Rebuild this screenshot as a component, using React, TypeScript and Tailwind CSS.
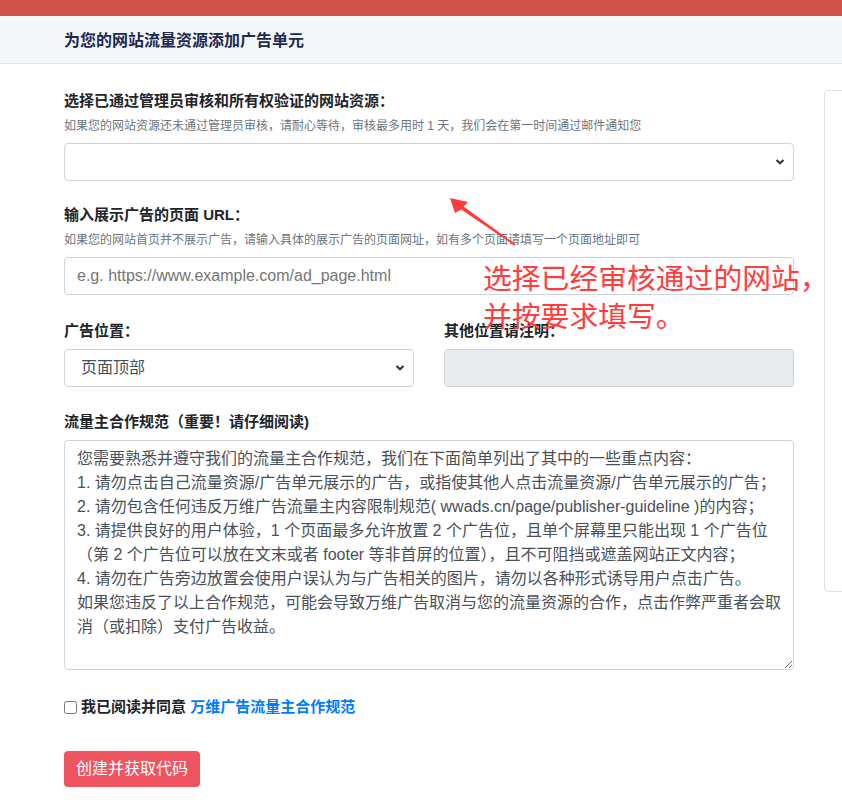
import React from 'react'

const rules = `您需要熟悉并遵守我们的流量主合作规范，我们在下面简单列出了其中的一些重点内容：
1. 请勿点击自己流量资源/广告单元展示的广告，或指使其他人点击流量资源/广告单元展示的广告；
2. 请勿包含任何违反万维广告流量主内容限制规范( wwads.cn/page/publisher-guideline )的内容；
3. 请提供良好的用户体验，1 个页面最多允许放置 2 个广告位，且单个屏幕里只能出现 1 个广告位
（第 2 个广告位可以放在文末或者 footer 等非首屏的位置），且不可阻挡或遮盖网站正文内容；
4. 请勿在广告旁边放置会使用户误认为与广告相关的图片，请勿以各种形式诱导用户点击广告。
如果您违反了以上合作规范，可能会导致万维广告取消与您的流量资源的合作，点击作弊严重者会取
消（或扣除）支付广告收益。`

function Chevron() {
  return (
    <svg width="10" height="7" viewBox="0 0 10 7" className="pointer-events-none absolute right-[9px] top-1/2 -translate-y-1/2">
      <path d="M1.5 1.5 L5 4.8 L8.5 1.5" fill="none" stroke="#343a40" strokeWidth="2.2" />
    </svg>
  )
}

function Label({ children }: { children: React.ReactNode }) {
  return <label className="block text-[15px] leading-[21px] font-bold text-[#212529]">{children}</label>
}

function Help({ children }: { children: React.ReactNode }) {
  return <p className="mt-[6px] text-[12px] leading-[18px] text-[#6c757d]">{children}</p>
}

export default function App() {
  return (
    <div
      className="relative min-h-[802px] w-full overflow-hidden bg-white"
      style={{ fontFamily: '"Liberation Sans", "Noto Sans CJK SC", sans-serif' }}
    >
      {/* top bar */}
      <div className="h-4 bg-[#d0514a]" />

      {/* header */}
      <div className="flex h-[48px] items-center border-b border-[#e3e6ea] bg-[#f4f7fa] pl-16 pt-[3px]">
        <h1 className="text-[16px] font-bold text-[#1c2a52]">为您的网站流量资源添加广告单元</h1>
      </div>

      <div className="flex gap-[30px] pl-16 pt-[26px]">
        {/* form */}
        <div className="w-[730px] shrink-0">
          <div>
            <Label>选择已通过管理员审核和所有权验证的网站资源：</Label>
            <Help>如果您的网站资源还未通过管理员审核，请耐心等待，审核最多用时 1 天，我们会在第一时间通过邮件通知您</Help>
            <div className="relative mt-2">
              <select className="h-[38px] w-full appearance-none rounded border border-[#ced4da] bg-white pl-4 text-[16px] text-[#495057]">
                <option></option>
              </select>
              <Chevron />
            </div>
          </div>

          <div className="mt-[23px]">
            <Label>输入展示广告的页面 URL：</Label>
            <Help>如果您的网站首页并不展示广告，请输入具体的展示广告的页面网址，如有多个页面请填写一个页面地址即可</Help>
            <input
              className="mt-2 h-[38px] w-full rounded border border-[#ced4da] px-3 text-[16px] text-[#495057] placeholder:text-[#757575]"
              placeholder="e.g. https://www.example.com/ad_page.html"
            />
          </div>

          <div className="mt-[25px] grid grid-cols-2 gap-[30px]">
            <div>
              <Label>广告位置：</Label>
              <div className="relative mt-[8px]">
                <select className="h-[38px] w-full appearance-none rounded border border-[#ced4da] bg-white pl-4 text-[16px] text-[#495057]">
                  <option>页面顶部</option>
                  <option>页面底部</option>
                  <option>其他位置</option>
                </select>
                <Chevron />
              </div>
            </div>
            <div>
              <Label>其他位置请注明：</Label>
              <input disabled className="mt-[8px] h-[38px] w-full rounded border border-[#ced4da] bg-[#e9ecef] px-3" />
            </div>
          </div>

          <div className="mt-[24px]">
            <Label>流量主合作规范（重要！请仔细阅读)</Label>
            <textarea
              className="mt-[8px] block h-[230px] w-full rounded border border-[#ced4da] px-3 py-[6px] text-[16px] leading-[24px] text-[#495057]"
              defaultValue={rules}
            />
          </div>

          <div className="mt-[26px] flex items-center gap-1">
            <input type="checkbox" className="m-0 h-[13px] w-[13px]" />
            <span className="text-[15px] font-bold text-[#212529]">
              我已阅读并同意 <a className="text-[#007bff]">万维广告流量主合作规范</a>
            </span>
          </div>

          <button className="mt-[32px] h-[36px] rounded bg-[#ef5461] px-3 text-[16px] text-white">
            创建并获取代码
          </button>
        </div>

        {/* side card */}
        <div className="h-[502px] w-[300px] shrink-0 rounded border border-[#dee2e6]" />
      </div>

      {/* annotation */}
      <svg width="90" height="65" viewBox="0 0 90 65" className="absolute left-[440px] top-[190px]">
        <polygon
          points="10,8 28,12 23.6,16.4 75.6,54.3 74.6,55.7 21.2,19.6 15,23"
          fill="#ff3b3b"
        />
      </svg>
      <div
        className="absolute left-[483px] top-[258px] text-[28.8px] leading-[38px] text-[#ff3d3d]"
        style={{ fontFamily: '"Noto Sans CJK SC", sans-serif' }}
      >
        选择已经审核通过的网站，
        <br />
        并按要求填写。
      </div>
    </div>
  )
}
